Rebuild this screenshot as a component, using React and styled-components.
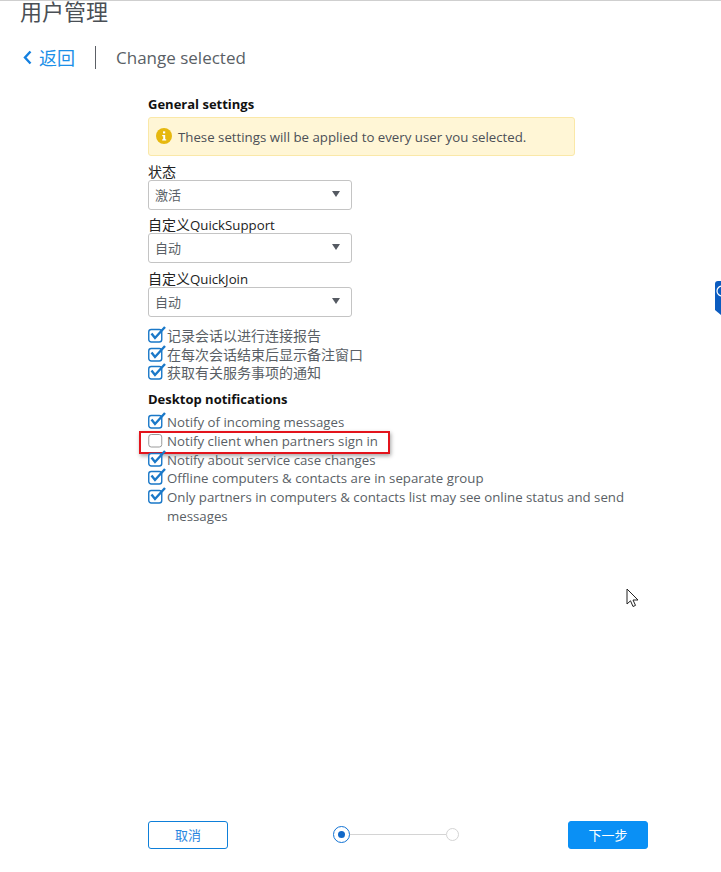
import React from "react";
import styled, { createGlobalStyle } from "styled-components";

const Global = createGlobalStyle`
  html, body {
    margin: 0;
    padding: 0;
    height: 100%;
    background: #fff;
    overflow: hidden;
  }
  body {
    font-family: "Open Sans", "Noto Sans CJK SC", sans-serif;
    color: #4a4f55;
  }
`;

const Page = styled.div`
  position: relative;
  height: 872px;
  display: flex;
  flex-direction: column;
  border-top: 1px solid #cfcfcf;
  box-sizing: border-box;
  overflow: hidden;
`;
const Title = styled.h1`
  margin: 0 0 0 20px;
  font-size: 22px;
  line-height: 21px;
  font-weight: 400;
  color: #4a4f55;
`;
const Breadcrumb = styled.div`
  display: flex;
  align-items: center;
  height: 24px;
  margin: 23px 0 0 23px;
`;
const BackLink = styled.a`
  display: flex;
  align-items: center;
  gap: 7px;
  font-size: 18px;
  color: #1b8fe8;
`;
const Divider = styled.div`
  width: 1px;
  height: 23px;
  margin: 0 20px;
  background: #5c6066;
`;
const Crumb = styled.div`
  font-size: 17px;
  color: #5a5f66;
`;
const Content = styled.div`
  width: 500px;
  margin: 26px 0 0 148px;
  flex: 1;
`;
const SectionTitle = styled.div`
  font-size: 13px;
  line-height: 18px;
  font-weight: 700;
  color: #111;
`;
const Alert = styled.div`
  display: flex;
  align-items: center;
  gap: 6px;
  box-sizing: border-box;
  width: 427px;
  height: 39px;
  margin-top: 4px;
  padding: 0 7px;
  background: #fff6d6;
  border: 1px solid #fae8a8;
  border-radius: 3px;
  font-size: 13.25px;
  color: #4c5057;
`;
const Field = styled.div`
  margin-top: ${(p) => p.$top}px;
`;
const Label = styled.div`
  height: 18px;
  font-size: 13.25px;
  line-height: 20px;
  color: #222;
`;
const Cjk = styled.span`
  font-size: 14px;
`;
const Select = styled.div`
  display: flex;
  align-items: center;
  justify-content: space-between;
  box-sizing: border-box;
  width: 204px;
  height: 30px;
  padding: 0 11px 2px 6px;
  background: #fff;
  border: 1px solid #c4c4c4;
  border-radius: 3px;
  font-size: 13px;
  color: #5a5f66;
`;
const Caret = styled.span`
  width: 0;
  height: 0;
  border-left: 4px solid transparent;
  border-right: 4px solid transparent;
  border-top: 6px solid #555a62;
`;
const CheckList = styled.div`
  margin-top: ${(p) => p.$top}px;
  display: flex;
  flex-direction: column;
`;
const CheckRow = styled.div`
  position: relative;
  display: flex;
  align-items: flex-start;
  gap: 4px;
  width: 490px;
  min-height: 18.7px;
  font-size: 13.25px;
  line-height: 18.7px;
  color: #5a5f66;
`;
const CheckSlot = styled.span`
  flex: none;
  width: 15px;
  height: 18px;
  display: block;
`;
const Highlight = styled.div`
  position: absolute;
  left: -9px;
  top: -1px;
  box-sizing: border-box;
  width: 251px;
  height: 23px;
  border: 2px solid #e3141c;
  box-shadow: 1px 2px 4px rgba(0, 0, 0, 0.35);
  pointer-events: none;
`;
const Footer = styled.div`
  display: flex;
  align-items: center;
  justify-content: space-between;
  width: 500px;
  margin: 0 0 23px 148px;
`;
const OutlineButton = styled.button`
  box-sizing: border-box;
  width: 80px;
  height: 28px;
  padding: 0 0 2px;
  background: #fff;
  border: 1px solid #0e7fd9;
  border-radius: 3px;
  font: inherit;
  font-size: 13px;
  color: #2a86e0;
`;
const PrimaryButton = styled(OutlineButton)`
  background: #0a90f5;
  border-color: #0a90f5;
  color: #fff;
`;
const Stepper = styled.div`
  display: flex;
  align-items: center;
  margin: 0 5px 1px 0;
`;
const StepActive = styled.span`
  box-sizing: border-box;
  width: 17px;
  height: 17px;
  border: 1px solid #1273d4;
  border-radius: 50%;
  display: flex;
  align-items: center;
  justify-content: center;
  &::after {
    content: "";
    width: 7px;
    height: 7px;
    border-radius: 50%;
    background: #1168c8;
  }
`;
const StepLine = styled.span`
  width: 96px;
  height: 1px;
  background: #d4d4d4;
`;
const StepIdle = styled.span`
  box-sizing: border-box;
  width: 13px;
  height: 13px;
  border: 1px solid #d4d4d4;
  border-radius: 50%;
`;
const SideTab = styled.div`
  position: absolute;
  top: 280px;
  right: 0;
  width: 6px;
  height: 34px;
  overflow: hidden;
`;
const Cursor = styled.svg`
  position: absolute;
  left: 626px;
  top: 587px;
`;

const Chevron = () => (
  <svg width="9" height="15" viewBox="0 0 9 15">
    <path d="M7.5 1.5 L2 7.5 L7.5 13.5" fill="none" stroke="#1480e0" strokeWidth="2.4" />
  </svg>
);

const InfoIcon = () => (
  <svg width="16" height="16" viewBox="0 0 16 16" style={{ marginTop: -2 }}>
    <circle cx="8" cy="8" r="8" fill="#e6b80f" />
    <rect x="7" y="3.4" width="2.2" height="2" fill="#fff" />
    <path d="M6.2 7h3v4.2h1v1.2H6.2v-1.2h1V8.2h-1z" fill="#fff" />
  </svg>
);

const Check = ({ checked }) => (
  <CheckSlot>
    <svg width="19" height="19" viewBox="0 0 19 19" style={{ marginTop: -2, display: "block" }}>
      <rect
        x="0.75"
        y="4.5"
        width="13"
        height="12.5"
        rx="2.5"
        fill="#fff"
        stroke={checked ? "#1a78c8" : "#9a9a9a"}
        strokeWidth={checked ? 1.4 : 1}
      />
      {checked && <path d="M3.5 8.5 L7 13 L17 2" fill="none" stroke="#1a78c8" strokeWidth="2.4" />}
    </svg>
  </CheckSlot>
);

const Option = ({ checked = true, children, marked, cjk }) => (
  <CheckRow>
    <Check checked={checked} />
    {cjk ? <Cjk>{children}</Cjk> : <span>{children}</span>}
    {marked && <Highlight />}
  </CheckRow>
);

const Dropdown = ({ label, suffix, value, top }) => (
  <Field $top={top}>
    <Label>
      <Cjk>{label}</Cjk>
      {suffix}
    </Label>
    <Select>
      {value}
      <Caret />
    </Select>
  </Field>
);

export default function App() {
  return (
    <Page>
      <Global />
      <Title>用户管理</Title>
      <Breadcrumb>
        <BackLink>
          <Chevron />
          返回
        </BackLink>
        <Divider />
        <Crumb>Change selected</Crumb>
      </Breadcrumb>
      <Content>
        <SectionTitle>General settings</SectionTitle>
        <Alert>
          <InfoIcon />
          These settings will be applied to every user you selected.
        </Alert>
        <Dropdown label="状态" value="激活" top={6} />
        <Dropdown label="自定义" suffix="QuickSupport" value="自动" top={5} />
        <Dropdown label="自定义" suffix="QuickJoin" value="自动" top={6} />
        <CheckList $top={10}>
          <Option cjk>记录会话以进行连接报告</Option>
          <Option cjk>在每次会话结束后显示备注窗口</Option>
          <Option cjk>获取有关服务事项的通知</Option>
        </CheckList>
        <Field $top={7}>
          <SectionTitle>Desktop notifications</SectionTitle>
        </Field>
        <CheckList $top={5}>
          <Option>Notify of incoming messages</Option>
          <Option checked={false} marked>
            Notify client when partners sign in
          </Option>
          <Option>Notify about service case changes</Option>
          <Option>Offline computers &amp; contacts are in separate group</Option>
          <Option>Only partners in computers &amp; contacts list may see online status and send messages</Option>
        </CheckList>
      </Content>
      <Footer>
        <OutlineButton>取消</OutlineButton>
        <Stepper>
          <StepActive />
          <StepLine />
          <StepIdle />
        </Stepper>
        <PrimaryButton>下一步</PrimaryButton>
      </Footer>
      <SideTab>
        <svg width="6" height="34" viewBox="0 0 6 34">
          <path d="M0 3 Q0 0 3 0 H6 V34 L0 29 Z" fill="#0b5cc0" />
          <circle cx="7" cy="10" r="5" fill="none" stroke="#fff" strokeWidth="1.2" />
        </svg>
      </SideTab>
      <Cursor width="14" height="21" viewBox="0 0 14 21">
        <path
          d="M1 1 V16 L4.5 12.8 L7 18.5 L9.5 17.4 L7 12 H12 Z"
          fill="#fff"
          stroke="#222"
          strokeWidth="1"
          strokeLinejoin="round"
        />
      </Cursor>
    </Page>
  );
}
